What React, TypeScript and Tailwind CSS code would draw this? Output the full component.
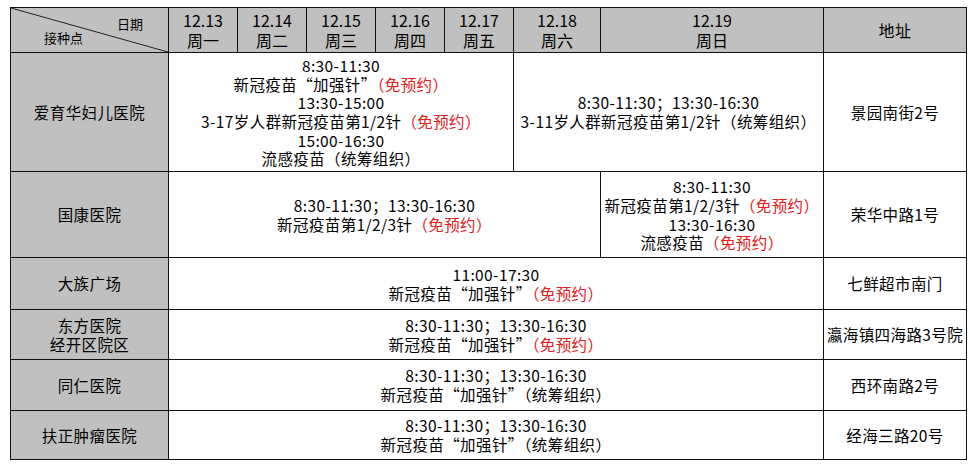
const font = { fontFamily: '"Noto Sans CJK SC", "Noto Sans", sans-serif' };

const dates = [
  ["12.13", "周一"],
  ["12.14", "周二"],
  ["12.15", "周三"],
  ["12.16", "周四"],
  ["12.17", "周五"],
  ["12.18", "周六"],
  ["12.19", "周日"],
];

const Free = () => <span className="text-[#e02020]">（免预约）</span>;

const Name = ({ children }: { children: React.ReactNode }) => (
  <div className="bg-[#c0c0c0] flex flex-col items-center justify-center text-center">
    {children}
  </div>
);

const Cell = ({
  span,
  children,
}: {
  span: string;
  children: React.ReactNode;
}) => (
  <div className={`${span} bg-white flex flex-col items-center justify-center text-center`}>
    {children}
  </div>
);

export default function App() {
  return (
    <div className="w-[976px] h-[466px] bg-white pl-[10px] pt-[7px] text-black" style={font}>
      <div className="w-[957px] bg-[#111] p-px grid gap-px grid-cols-[157px_68px_68px_68px_68px_68px_86px_222px_142px] grid-rows-[44px_118px_85px_51px_49px_50px_48px] text-[15.5px] leading-[18.6px] tracking-[0.4px]">
        {/* 表头 */}
        <div className="relative bg-[#c0c0c0] text-[13px] leading-[16px] tracking-normal">
          <svg
            className="absolute inset-0 w-full h-full"
            viewBox="0 0 100 100"
            preserveAspectRatio="none"
          >
            <line x1="0" y1="0" x2="100" y2="100" stroke="#222" strokeWidth="1" vectorEffect="non-scaling-stroke" />
          </svg>
          <span className="absolute left-[106px] top-[8px]">日期</span>
          <span className="absolute left-[33px] top-[22px]">接种点</span>
        </div>
        {dates.map(([d, w]) => (
          <div key={d} className="bg-[#c0c0c0] flex flex-col items-center justify-center text-[16px] leading-[20px] tracking-normal">
            <span>{d}</span>
            <span>{w}</span>
          </div>
        ))}
        <div className="bg-[#c0c0c0] flex items-center justify-center text-[16px]">地址</div>

        {/* 爱育华妇儿医院 */}
        <Name>爱育华妇儿医院</Name>
        <Cell span="col-span-5">
          <span>8:30-11:30</span>
          <span>新冠疫苗“加强针”<Free /></span>
          <span>13:30-15:00</span>
          <span>3-17岁人群新冠疫苗第1/2针<Free /></span>
          <span>15:00-16:30</span>
          <span>流感疫苗（统筹组织）</span>
        </Cell>
        <Cell span="col-span-2">
          <span>8:30-11:30；13:30-16:30</span>
          <span>3-11岁人群新冠疫苗第1/2针（统筹组织）</span>
        </Cell>
        <Cell span="">景园南街2号</Cell>

        {/* 国康医院 */}
        <Name>国康医院</Name>
        <Cell span="col-span-6">
          <span>8:30-11:30；13:30-16:30</span>
          <span>新冠疫苗第1/2/3针<Free /></span>
        </Cell>
        <Cell span="">
          <span>8:30-11:30</span>
          <span>新冠疫苗第1/2/3针<Free /></span>
          <span>13:30-16:30</span>
          <span>流感疫苗<Free /></span>
        </Cell>
        <Cell span="">荣华中路1号</Cell>

        {/* 大族广场 */}
        <Name>大族广场</Name>
        <Cell span="col-span-7">
          <span>11:00-17:30</span>
          <span>新冠疫苗“加强针”<Free /></span>
        </Cell>
        <Cell span="">七鲜超市南门</Cell>

        {/* 东方医院 */}
        <Name>
          <span>东方医院</span>
          <span>经开区院区</span>
        </Name>
        <Cell span="col-span-7">
          <span>8:30-11:30；13:30-16:30</span>
          <span>新冠疫苗“加强针”<Free /></span>
        </Cell>
        <Cell span="">瀛海镇四海路3号院</Cell>

        {/* 同仁医院 */}
        <Name>同仁医院</Name>
        <Cell span="col-span-7">
          <span>8:30-11:30；13:30-16:30</span>
          <span>新冠疫苗“加强针”（统筹组织）</span>
        </Cell>
        <Cell span="">西环南路2号</Cell>

        {/* 扶正肿瘤医院 */}
        <Name>扶正肿瘤医院</Name>
        <Cell span="col-span-7">
          <span>8:30-11:30；13:30-16:30</span>
          <span>新冠疫苗“加强针”（统筹组织）</span>
        </Cell>
        <Cell span="">经海三路20号</Cell>
      </div>
    </div>
  );
}
